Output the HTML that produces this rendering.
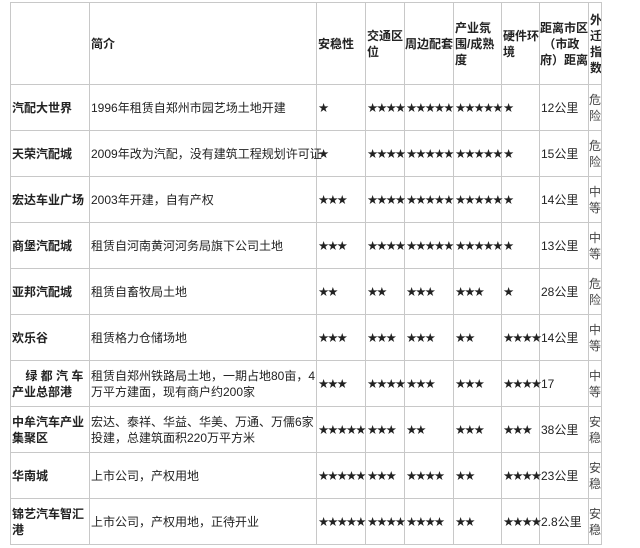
<!DOCTYPE html>
<html><head><meta charset="utf-8"><style>
html,body{margin:0;padding:0;background:#fff;width:640px;height:548px;overflow:hidden}
table{position:absolute;left:10px;top:2px;width:591px;border-collapse:collapse;table-layout:fixed;font-family:"Liberation Sans","Noto Sans CJK SC",sans-serif;font-size:12px;color:#222;line-height:16px}
td{border:1px solid #c8c8c8;padding:0 0 0 1px;vertical-align:middle;overflow:hidden;word-break:break-all}
td.s{white-space:nowrap;overflow:visible;letter-spacing:-1.9px;font-family:"DejaVu Sans",sans-serif;font-size:12.5px}
tr{height:46px}
tr.h{height:82px}
tr.h td{font-weight:bold}
td:first-child{font-weight:bold}
td.x{color:#444;padding:0}
</style></head><body>
<table>
<colgroup><col style="width:79px"><col style="width:227px"><col style="width:49px"><col style="width:39px"><col style="width:49px"><col style="width:48px"><col style="width:38px"><col style="width:49px"><col style="width:13px"></colgroup>
<tr class="h"><td></td><td>简介</td><td>安稳性</td><td>交通区位</td><td style="white-space:nowrap;overflow:visible;padding:0">周边配套</td><td>产业氛围/成熟度</td><td>硬件环境</td><td style="padding:0">距离市区<br>&nbsp;（市政<br>府）距离</td><td>外迁指数</td></tr>
<tr><td>汽配大世界</td><td>1996年租赁自郑州市园艺场土地开建</td><td class="s">★</td><td class="s">★★★★</td><td class="s">★★★★★</td><td class="s">★★★★★</td><td class="s">★</td><td>12公里</td><td class="x">危险</td></tr>
<tr><td>天荣汽配城</td><td style="white-space:nowrap;overflow:visible">2009年改为汽配，没有建筑工程规划许可证</td><td class="s">★</td><td class="s">★★★★</td><td class="s">★★★★★</td><td class="s">★★★★★</td><td class="s">★</td><td>15公里</td><td class="x">危险</td></tr>
<tr><td>宏达车业广场</td><td>2003年开建，自有产权</td><td class="s">★★★</td><td class="s">★★★★</td><td class="s">★★★★★</td><td class="s">★★★★★</td><td class="s">★</td><td>14公里</td><td class="x">中等</td></tr>
<tr><td>商堡汽配城</td><td>租赁自河南黄河河务局旗下公司土地</td><td class="s">★★★</td><td class="s">★★★★</td><td class="s">★★★★★</td><td class="s">★★★★★</td><td class="s">★</td><td>13公里</td><td class="x">中等</td></tr>
<tr><td>亚邦汽配城</td><td>租赁自畜牧局土地</td><td class="s">★★</td><td class="s">★★</td><td class="s">★★★</td><td class="s">★★★</td><td class="s">★</td><td>28公里</td><td class="x">危险</td></tr>
<tr><td>欢乐谷</td><td>租赁格力仓储场地</td><td class="s">★★★</td><td class="s">★★★</td><td class="s">★★★</td><td class="s">★★</td><td class="s">★★★★</td><td>14公里</td><td class="x">中等</td></tr>
<tr><td>&nbsp;&nbsp;&nbsp;&nbsp;绿 都 汽 车产业总部港</td><td>租赁自郑州铁路局土地，一期占地80亩，4万平方建面，现有商户约200家</td><td class="s">★★★</td><td class="s">★★★★</td><td class="s">★★★</td><td class="s">★★★</td><td class="s">★★★★</td><td>17</td><td class="x">中等</td></tr>
<tr><td>中牟汽车产业集聚区</td><td>宏达、泰祥、华益、华美、万通、万儒6家投建，总建筑面积220万平方米</td><td class="s">★★★★★</td><td class="s">★★★</td><td class="s">★★</td><td class="s">★★★</td><td class="s">★★★</td><td>38公里</td><td class="x">安稳</td></tr>
<tr><td>华南城</td><td>上市公司，产权用地</td><td class="s">★★★★★</td><td class="s">★★★</td><td class="s">★★★★</td><td class="s">★★</td><td class="s">★★★★</td><td>23公里</td><td class="x">安稳</td></tr>
<tr><td>锦艺汽车智汇港</td><td>上市公司，产权用地，正待开业</td><td class="s">★★★★★</td><td class="s">★★★★</td><td class="s">★★★★</td><td class="s">★★</td><td class="s">★★★★</td><td>2.8公里</td><td class="x">安稳</td></tr>
</table>
</body></html>
